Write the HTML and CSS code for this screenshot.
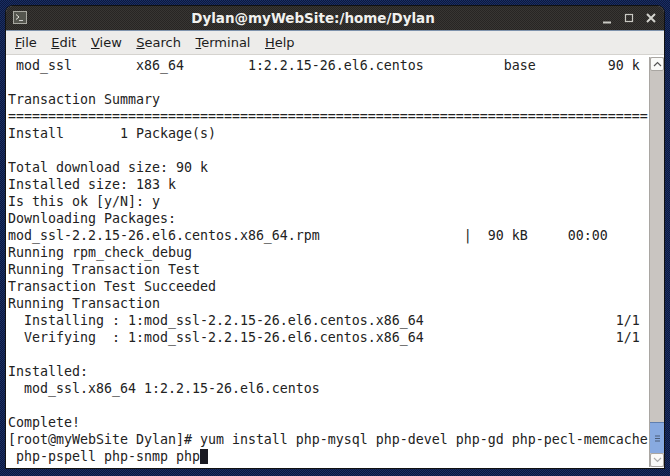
FILE: index.html
```
<!DOCTYPE html>
<html lang="en">
<head>
<meta charset="utf-8">
<title>Dylan@myWebSite:/home/Dylan</title>
<link rel="stylesheet" href="styles.css">
</head>
<body>
<div class="window">
  <header class="titlebar">
    <svg class="app-icon" width="14" height="14" viewBox="0 0 14 14"><rect x="0.5" y="0.5" width="13" height="12" fill="#55564f" stroke="#a9a9a2"/><path d="M3 3.500l3 2.500-3 2.500" fill="none" stroke="#e6e6e0" stroke-width="1"/><path d="M6 9.500h4" stroke="#ccc"/></svg>
    <div class="title">Dylan@myWebSite:/home/Dylan</div>
    <div class="controls">
      <svg width="10" height="12" viewBox="0 0 10 12"><path d="M1 10.500h8" stroke="#c9c9c3" stroke-width="2"/></svg>
      <svg width="10" height="12" viewBox="0 0 10 12"><rect x="1.500" y="2.500" width="7" height="7" fill="none" stroke="#c9c9c3" stroke-width="1.200"/></svg>
      <svg width="10" height="12" viewBox="0 0 10 12"><path d="M1 2l8 8M9 2l-8 8" stroke="#d4d4ce" stroke-width="2"/></svg>
    </div>
  </header>
  <nav class="menubar">
    <span><u>F</u>ile</span><span><u>E</u>dit</span><span><u>V</u>iew</span><span><u>S</u>earch</span><span><u>T</u>erminal</span><span><u>H</u>elp</span>
  </nav>
  <main class="terminal">
<pre class="screen"> mod_ssl        x86_64        1:2.2.15-26.el6.centos          base         90 k

Transaction Summary
================================================================================
Install       1 Package(s)

Total download size: 90 k
Installed size: 183 k
Is this ok [y/N]: y
Downloading Packages:
mod_ssl-2.2.15-26.el6.centos.x86_64.rpm                  |  90 kB     00:00
Running rpm_check_debug
Running Transaction Test
Transaction Test Succeeded
Running Transaction
  Installing : 1:mod_ssl-2.2.15-26.el6.centos.x86_64                        1/1
  Verifying  : 1:mod_ssl-2.2.15-26.el6.centos.x86_64                        1/1

Installed:
  mod_ssl.x86_64 1:2.2.15-26.el6.centos

Complete!
[root@myWebSite Dylan]# yum install php-mysql php-devel php-gd php-pecl-memcache
 php-pspell php-snmp php<span class="cursor"> </span></pre>
    <div class="scrollbar">
      <div class="arrow"><svg width="9" height="6" viewBox="0 0 9 6"><path d="M1 5l3.500-3.500L8 5" fill="none" stroke="#555" stroke-width="1.200"/></svg></div>
      <div class="trough"></div>
      <div class="thumb"><svg width="7" height="7" viewBox="0 0 7 7"><path d="M1 1h5M1 3.500h5M1 6h5" stroke="#4a5c78"/></svg></div>
      <div class="arrow"><svg width="9" height="6" viewBox="0 0 9 6"><path d="M1 1l3.500 3.500L8 1" fill="none" stroke="#aaa" stroke-width="1.200"/></svg></div>
    </div>
  </main>
</div>
</body>
</html>
```
FILE: styles.css
```
html, body { margin: 0; height: 100%; overflow: hidden; }
body {
  background-color: #12214f;
  background-image: repeating-conic-gradient(#0b1a3f 0 25%, #1b2d63 0 50%);
  background-size: 2px 2px;
  padding: 6px 6px 8px 6px;
  box-sizing: border-box;
}
.window {
  height: 100%;
  display: flex;
  flex-direction: column;
  background: #fff;
  border-radius: 7px 7px 0 0;
  overflow: hidden;
  box-shadow: 0 0 0 1px #111;
}
.titlebar {
  height: 24px;
  flex: none;
  display: flex;
  align-items: center;
  padding: 0 8px 0 7px;
  background-color: #2c2a28;
  background-image: repeating-conic-gradient(#383633 0 25%, #272523 0 50%);
  background-size: 2px 2px;
  border-bottom: 1px solid #7f93ac;
}
.app-icon { flex: none; }
.title {
  flex: 1;
  text-align: center;
  font: bold 13.5px "DejaVu Sans", sans-serif;
  color: #f1f1ee;
  padding-right: 3px;
}
.controls { display: flex; gap: 12px; align-items: center; flex: none; }
.controls svg { display: block; }
.menubar {
  height: 24px;
  flex: none;
  box-sizing: border-box;
  display: flex;
  align-items: center;
  gap: 14.5px;
  padding: 0 9px;
  background: #edecea;
  font: 13px "DejaVu Sans", sans-serif;
  color: #1c1c1c;
  border-bottom: 1px solid #d5d3cf;
}
.terminal {
  flex: 1;
  min-height: 0;
  display: flex;
  background: #fff;
  padding-left: 2px;
}
.screen {
  flex: 1;
  margin: 2px 0 0;
  font: 13.29px/17px "DejaVu Sans Mono", monospace;
  color: #222;
  white-space: pre;
  overflow: hidden;
}
.cursor { background: #1a1a22; }
.scrollbar {
  flex: none;
  width: 15px;
  margin: 2px 0 1px;
  display: flex;
  flex-direction: column;
  background: #c9c5c1;
  border-left: 1px solid #a9a6a2;
  box-sizing: border-box;
}
.arrow {
  height: 14px;
  flex: none;
  display: flex;
  align-items: center;
  justify-content: center;
  background: #fafaf8;
  border: 1px solid #a9a6a2;
  border-radius: 2px;
  box-sizing: border-box;
}
.trough { flex: 1; }
.thumb {
  height: 31px;
  flex: none;
  display: flex;
  align-items: center;
  justify-content: center;
  background: #88aae0;
  border-top: 1px solid #5f7fb0;
  box-sizing: border-box;
}
.thumb svg { display: block; }
```
